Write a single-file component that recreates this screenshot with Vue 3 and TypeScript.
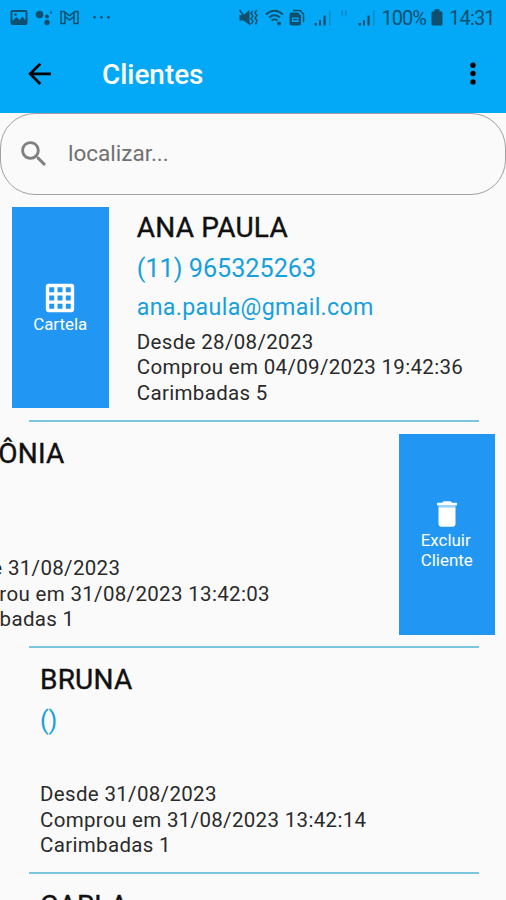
<script setup lang="ts">
interface Client {
  name: string
  phone: string
  email: string
  since: string
  bought: string
  stamps: number
  swipe: 'none' | 'start' | 'end'
}

const clients: Client[] = [
  { name: 'ANA PAULA', phone: '(11) 965325263', email: 'ana.paula@gmail.com', since: '28/08/2023', bought: '04/09/2023 19:42:36', stamps: 5, swipe: 'start' },
  { name: 'ANTÔNIA', phone: '', email: '', since: '31/08/2023', bought: '31/08/2023 13:42:03', stamps: 1, swipe: 'end' },
  { name: 'BRUNA', phone: '()', email: '', since: '31/08/2023', bought: '31/08/2023 13:42:14', stamps: 1, swipe: 'none' },
  { name: 'CARLA', phone: '', email: '', since: '', bought: '', stamps: 0, swipe: 'none' },
]
</script>

<template>
  <div class="screen">
    <header class="top">
      <div class="status">
        <svg class="notices" viewBox="0 0 120 36">
          <path fill-rule="evenodd" d="M12.500 10h13q2 0 2 2v11q0 2-2 2h-13q-2 0-2-2v-11q0-2 2-2zM12.500 12v9l4-4 3 3 3-3.500 3 4v-8.500z" />
          <circle cx="15.500" cy="14.500" r="1.300" />
          <circle cx="39.500" cy="14.500" r="3.800" />
          <circle cx="47" cy="16.500" r="2" />
          <circle cx="47" cy="22.500" r="2.700" />
          <circle cx="51" cy="12.500" r="1" />
          <path class="line" d="M61 11.500v12h4v-7l4.500 3.500 4.500-3.500v7h4v-12h-3l-5.500 4.300-5.500-4.300zM65 16.500v-4M74 16.500v-4" />
          <circle cx="94.500" cy="17.200" r="1.300" />
          <circle cx="101.500" cy="17.200" r="1.300" />
          <circle cx="108.500" cy="17.200" r="1.300" />
        </svg>
        <svg class="signals" viewBox="238 0 140 36">
          <path d="M239.500 15h4l6-5v15l-6-4.500h-4z" />
          <path class="line" d="M239.500 10l11 15M252.500 11l-1.500 2.500 2 2.500-2 2.500 2 2.500-1.500 3M256.500 10l-1.500 3 2 2.500-2 2.500 2 2.500-1.500 4" />
          <path class="line wifi" d="M266 14.500q8.500-7.500 17 0M269 17.500q5.500-4.500 11 0M271.500 20.500q3-2.200 6 0" />
          <circle cx="279" cy="23.500" r="2" />
          <path class="line" d="M293 10.500h7l3.500 3.500v8" />
          <path fill-rule="evenodd" d="M291.500 12.500h6.500l3 3v8q0 2-2 2h-7.500q-2 0-2-2v-9q0-2 2-2zM292 17.500v4.500h6.500v-4.500z" />
          <path d="M293 18.800h4.500v1.500h-4.500z" />
          <path d="M314.500 23h2.500v2.500h-2.500zM319 20h2v5.500h-2zM323.500 15.500h2.200v10h-2.200z" />
          <path opacity=".35" d="M329 10.500h1.500v15h-1.500zM341.500 10.500h1.500v5h-1.500zM345 10.500h1.500v5h-1.500zM373 10.500h1.500v15h-1.500z" />
          <path d="M358.500 23h2.500v2.500h-2.500zM363 20h2v5.500h-2zM367.500 15.500h2.200v10h-2.200z" />
        </svg>
        <span class="level">100%</span>
        <svg class="battery" viewBox="0 0 12 36"><path d="M3.500 9.300h5v2h1.500q1.500 0 1.500 1.500v11.200q0 1.500-1.500 1.500h-8q-1.500 0-1.500-1.500v-11.200q0-1.500 1.500-1.500h1.500z" /></svg>
        <span class="clock">14:31</span>
      </div>
      <div class="bar">
        <svg class="back" viewBox="0 0 24 24"><path d="M20.800 11.500H5M12.600 3.700L4.800 11.500l7.800 7.800" /></svg>
        <h1>Clientes</h1>
        <svg class="more" viewBox="0 0 6 24"><circle cx="3" cy="3.200" r="2.700" /><circle cx="3" cy="11.500" r="2.700" /><circle cx="3" cy="19.900" r="2.700" /></svg>
      </div>
    </header>

    <label class="search">
      <svg viewBox="0 0 24 24"><path d="M15.500 14h-.79l-.28-.27C15.410 12.590 16 11.110 16 9.500 16 5.910 13.090 3 9.500 3S3 5.910 3 9.500 5.910 16 9.500 16c1.610 0 3.090-.59 4.230-1.570l.27.28v.79l5 4.990L20.490 19l-4.990-5zm-6 0C7.010 14 5 11.990 5 9.500S7.010 5 9.500 5 14 7.010 14 9.500 11.990 14 9.500 14z" /></svg>
      <input type="text" placeholder="localizar...">
    </label>

    <main>
      <section v-for="client in clients" :key="client.name" class="row">
        <div class="slide" :class="client.swipe">
          <button v-if="client.swipe === 'start'" class="action">
            <svg viewBox="0 0 24 24"><path fill-rule="evenodd" d="M4 2h16q2 0 2 2v16q0 2-2 2H4q-2 0-2-2V4q0-2 2-2zM4.400 4.400v3.500h3.500v-3.500zM10.250 4.400v3.500h3.500v-3.500zM16.100 4.400v3.500h3.500v-3.500zM4.400 10.250v3.500h3.500v-3.500zM10.250 10.250v3.500h3.500v-3.500zM16.100 10.250v3.500h3.500v-3.500zM4.400 16.100v3.500h3.500v-3.500zM10.250 16.100v3.500h3.500v-3.500zM16.100 16.100v3.500h3.500v-3.500z" /></svg>
            <span>Cartela</span>
          </button>
          <div class="info">
            <h2>{{ client.name }}</h2>
            <p class="phone">{{ client.phone }}</p>
            <p class="email">{{ client.email }}</p>
            <template v-if="client.since">
              <p>Desde {{ client.since }}</p>
              <p>Comprou em {{ client.bought }}</p>
              <p>Carimbadas {{ client.stamps }}</p>
            </template>
          </div>
          <button v-if="client.swipe === 'end'" class="action">
            <svg viewBox="0 0 24 24"><path d="M6 7.200h12V19c0 1.100-.9 2-2 2H8c-1.100 0-2-.9-2-2zM19 4h-3.500l-1-1h-5l-1 1H5v2h14z" /><path class="lid" d="M6 6h12v1.200H6z" /></svg>
            <span>Excluir<br>Cliente</span>
          </button>
        </div>
        <hr>
      </section>
    </main>
  </div>
</template>

<style>
body {
  margin: 0;
  overflow: hidden;
}
</style>

<style scoped>
.screen {
  box-sizing: border-box;
  width: 100%;
  height: 900px;
  overflow: hidden;
  background: #fafafa;
  color: #2a2a2a;
  font-family: Roboto, sans-serif;
}
.top {
  height: 113px;
  background: #03a9f7;
}
.status {
  display: flex;
  height: 36px;
  color: #10506e;
}
.status svg {
  flex: none;
  height: 36px;
  fill: #10506e;
}
.status .line {
  fill: none;
  stroke: #10506e;
  stroke-width: 1.5;
}
.status .wifi {
  stroke-width: 1.8;
}
.notices {
  width: 120px;
}
.signals {
  width: 140px;
  margin-left: 118px;
}
.level,
.clock {
  font-size: 20px;
  line-height: 36px;
  white-space: nowrap;
}
.level {
  width: 50px;
  margin-left: 3.500px;
  letter-spacing: -1px;
}
.status .battery {
  width: 12px;
  margin-left: -.5px;
}
.clock {
  margin-left: 6px;
  letter-spacing: -.8px;
}
.bar {
  display: flex;
  align-items: center;
  height: 76px;
  padding: 0 30px 0 24px;
}
.back {
  width: 31px;
  height: 31px;
  fill: none;
  stroke: #000;
  stroke-width: 2.1;
}
.bar h1 {
  margin: 1px auto 0 47px;
  color: #fff;
  font-size: 27.900px;
  font-weight: 500;
  line-height: 36px;
}
.more {
  width: 6px;
  height: 24px;
  fill: #000;
}
.search {
  display: flex;
  box-sizing: border-box;
  align-items: center;
  height: 82.400px;
  padding-left: 16px;
  border: 1.400px solid #a0a0a0;
  border-radius: 35px;
}
.search svg {
  width: 34px;
  height: 34px;
  fill: #808080;
}
.search input {
  width: 300px;
  height: 36px;
  margin-left: 17px;
  padding: 0 0 2px;
  border: 0;
  outline: 0;
  background: none;
  color: #555;
  font: 22.500px Roboto, sans-serif;
}
.search input::placeholder {
  color: #707070;
}
.row {
  height: 226.200px;
}
.slide {
  display: flex;
  height: 201px;
  padding: 12px 0 11.300px 40px;
}
.slide.start {
  padding-left: 12px;
}
.slide.end {
  justify-content: flex-end;
  padding-right: 11px;
  padding-left: 0;
}
.action {
  display: flex;
  flex: none;
  flex-direction: column;
  align-items: center;
  justify-content: center;
  width: 96.500px;
  height: 201px;
  padding: 0;
  border: 0;
  background: #2196f3;
  color: #fff;
  font: 16.900px/19.700px Roboto, sans-serif;
  text-align: left;
}
.action svg {
  width: 34px;
  height: 34px;
  fill: #fff;
}
.action .lid {
  fill: #a6d5fa;
}
.info {
  flex: none;
  width: 380px;
  padding-top: .5px;
  white-space: nowrap;
}
.start .info {
  margin-left: 28.300px;
}
.end .info {
  margin-right: 75px;
}
.info h2 {
  height: 40px;
  margin: 0;
  color: #101010;
  font-size: 28px;
  font-weight: 400;
  line-height: 40px;
  letter-spacing: .2px;
  -webkit-text-stroke: .4px #101010;
}
.info p {
  height: 25.400px;
  margin: 0;
  font-size: 20.500px;
  letter-spacing: .33px;
  line-height: 25.400px;
}
.info .phone {
  height: 40px;
  color: #16a0dc;
  font-size: 25.200px;
  letter-spacing: 0;
  line-height: 41px;
}
.info .email {
  height: 42.200px;
  color: #16a0dc;
  font-size: 23.200px;
  line-height: 38px;
}
hr {
  height: 2px;
  margin: 0 27.500px 0 29px;
  border: 0;
  background: #79c6df;
}
</style>
